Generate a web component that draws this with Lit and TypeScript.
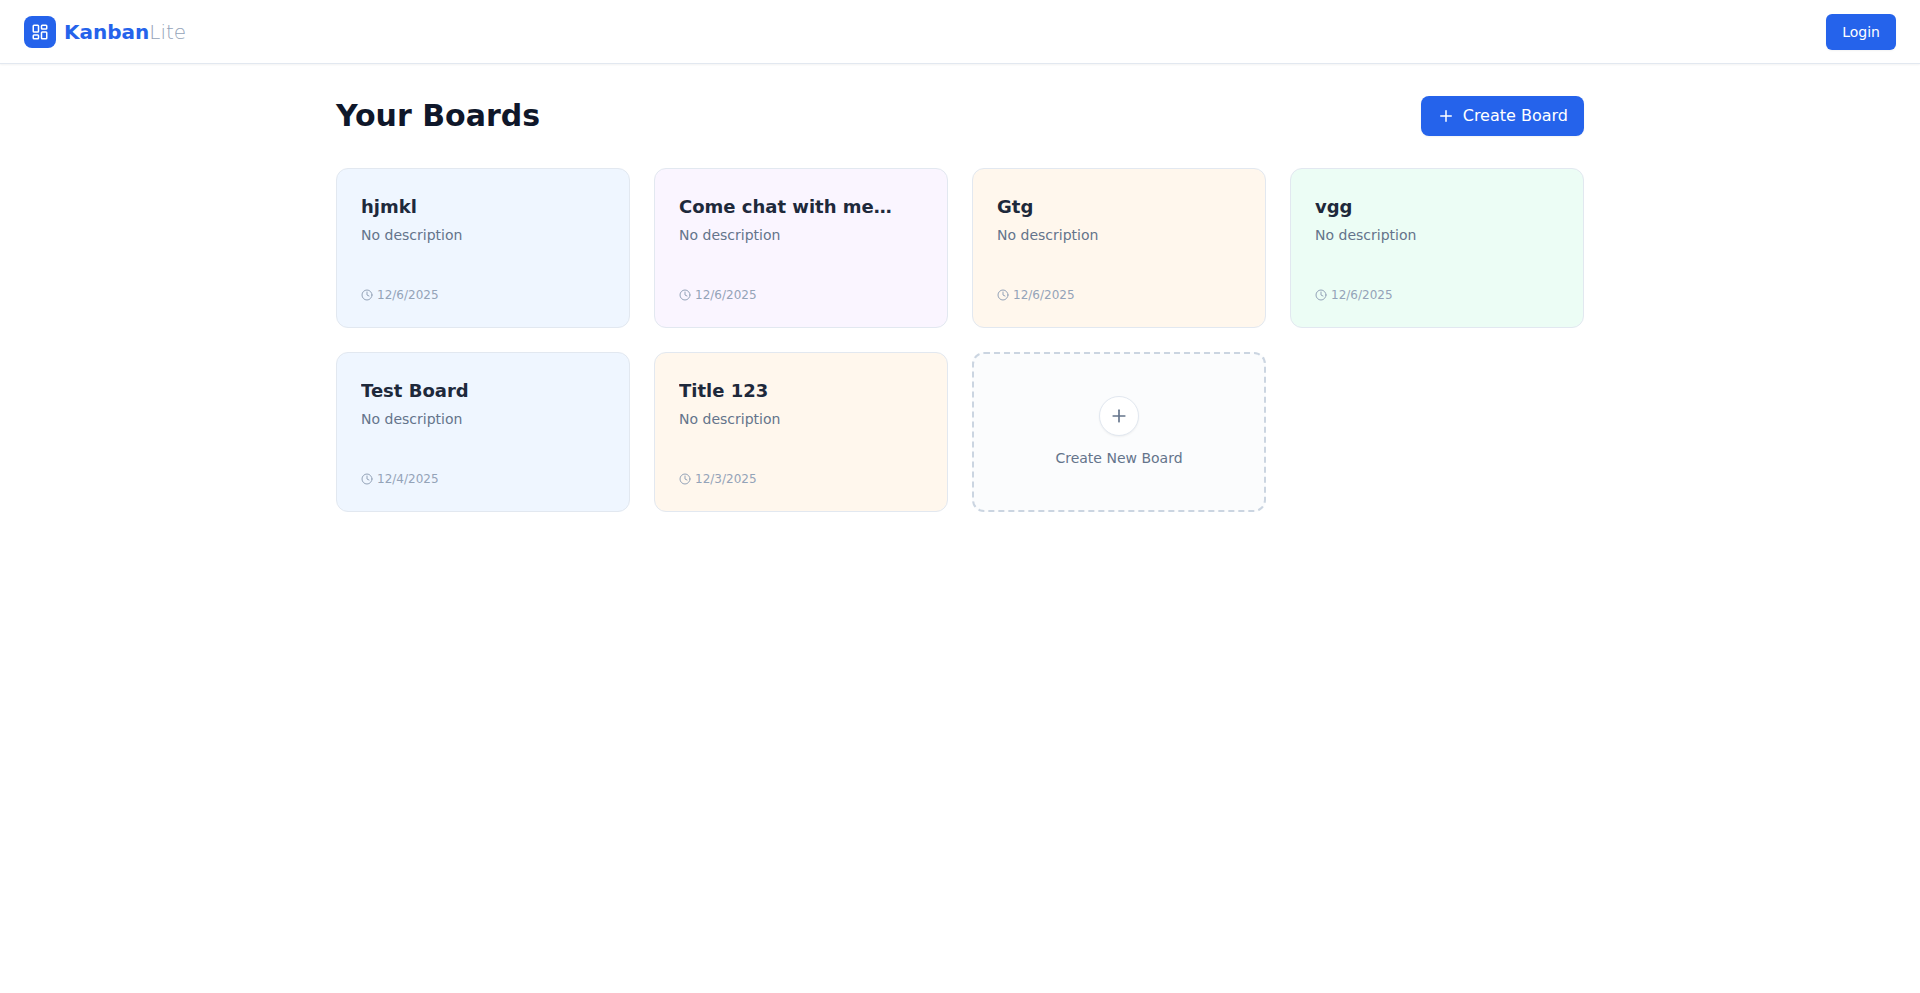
import { LitElement, html, css } from "lit";
import { customElement, state } from "lit/decorators.js";

interface Board {
  title: string;
  date: string;
  tone: "blue" | "purple" | "orange" | "green";
}

const plusIcon = html`<svg class="icon" viewBox="0 0 24 24" aria-hidden="true">
  <path d="M5 12h14" /><path d="M12 5v14" />
</svg>`;

const clockIcon = html`<svg class="icon" viewBox="0 0 24 24" aria-hidden="true">
  <circle cx="12" cy="12" r="10" /><path d="M12 6v6l4 2" />
</svg>`;

const dashboardIcon = html`<svg class="icon" viewBox="0 0 24 24" aria-hidden="true">
  <rect width="7" height="9" x="3" y="3" rx="1" />
  <rect width="7" height="5" x="14" y="3" rx="1" />
  <rect width="7" height="9" x="14" y="12" rx="1" />
  <rect width="7" height="5" x="3" y="16" rx="1" />
</svg>`;

@customElement("app-root")
export class AppRoot extends LitElement {
  @state() private boards: Board[] = [
    { title: "hjmkl", date: "12/6/2025", tone: "blue" },
    { title: "Come chat with me…", date: "12/6/2025", tone: "purple" },
    { title: "Gtg", date: "12/6/2025", tone: "orange" },
    { title: "vgg", date: "12/6/2025", tone: "green" },
    { title: "Test Board", date: "12/4/2025", tone: "blue" },
    { title: "Title 123", date: "12/3/2025", tone: "orange" },
  ];

  static styles = css`
    :host {
      display: block;
      min-height: 100vh;
      background: #fff;
      color: #0f172a;
      font-family: "DejaVu Sans", sans-serif;
      font-size: 16px;
      line-height: 24px;
    }
    *, *::before, *::after { box-sizing: border-box; }
    h1, h2, p, ul { margin: 0; padding: 0; }
    a { color: inherit; text-decoration: none; }
    button { font: inherit; border: 0; cursor: pointer; }
    .icon {
      display: block;
      width: 100%;
      height: 100%;
      fill: none;
      stroke: currentColor;
      stroke-width: 2;
      stroke-linecap: round;
      stroke-linejoin: round;
    }
    .header {
      display: flex;
      align-items: center;
      justify-content: space-between;
      height: 64px;
      padding: 0 24px;
      border-bottom: 1px solid #e2e8f0;
      background: #fff;
      box-shadow: 0 1px 2px rgb(0 0 0 / 5%);
    }
    .brand { display: flex; align-items: center; gap: 8px; }
    .logo {
      width: 32px;
      height: 32px;
      padding: 7px;
      border-radius: 8px;
      background: #2563eb;
      color: #fff;
    }
    .brand-name {
      font-size: 20px;
      line-height: 28px;
      font-weight: 700;
      color: #2563eb;
    }
    .brand-light { font-weight: 300; color: #94a3b8; }
    .login {
      height: 36px;
      padding: 0 16px;
      border-radius: 6px;
      background: #2563eb;
      color: #fff;
      font-size: 14px;
      line-height: 20px;
      box-shadow: 0 1px 2px rgb(0 0 0 / 5%);
    }
    .main { max-width: 1280px; margin: 0 auto; padding: 32px 16px; }
    .toolbar {
      display: flex;
      align-items: center;
      justify-content: space-between;
      margin-bottom: 32px;
    }
    .heading { font-size: 30px; line-height: 36px; font-weight: 700; }
    .create {
      display: flex;
      align-items: center;
      gap: 8px;
      padding: 8px 16px;
      border-radius: 8px;
      background: #2563eb;
      color: #fff;
      box-shadow: 0 1px 2px rgb(0 0 0 / 5%);
    }
    .create-icon { width: 18px; height: 18px; }
    .grid {
      display: grid;
      grid-template-columns: repeat(auto-fill, minmax(272px, 1fr));
      grid-auto-rows: 160px;
      gap: 24px;
      list-style: none;
    }
    .card {
      display: flex;
      flex-direction: column;
      justify-content: space-between;
      height: 100%;
      padding: 24px;
      border: 1px solid #e2e8f0;
      border-radius: 12px;
    }
    .blue { background: #eff6ff; }
    .purple { background: #faf5ff; }
    .orange { background: #fff7ed; }
    .green { background: #ecfdf5; }
    .card-title {
      margin-bottom: 4px;
      overflow: hidden;
      white-space: nowrap;
      text-overflow: ellipsis;
      font-size: 18px;
      line-height: 28px;
      font-weight: 700;
      color: #1e293b;
    }
    .card-text { font-size: 14px; line-height: 20px; color: #64748b; }
    .card-date {
      display: flex;
      align-items: center;
      gap: 4px;
      font-size: 12px;
      line-height: 16px;
      color: #94a3b8;
    }
    .date-icon { width: 12px; height: 12px; }
    .new-board {
      display: flex;
      flex-direction: column;
      align-items: center;
      justify-content: center;
      gap: 12px;
      width: 100%;
      height: 100%;
      border: 2px dashed #cbd5e1;
      border-radius: 12px;
      background: rgb(248 250 252 / 50%);
      color: #64748b;
      font-size: 14px;
      line-height: 20px;
    }
    .new-icon {
      width: 40px;
      height: 40px;
      padding: 9px;
      border: 1px solid #e2e8f0;
      border-radius: 50%;
      background: #fff;
      box-shadow: 0 1px 2px rgb(0 0 0 / 5%);
    }
  `;

  render() {
    return html`
      <header class="header">
        <a class="brand" href="#">
          <span class="logo">${dashboardIcon}</span>
          <span class="brand-name">Kanban<span class="brand-light">Lite</span></span>
        </a>
        <button class="login" type="button">Login</button>
      </header>
      <main class="main">
        <div class="toolbar">
          <h1 class="heading">Your Boards</h1>
          <button class="create" type="button">
            <span class="create-icon">${plusIcon}</span>Create Board
          </button>
        </div>
        <ul class="grid">
          ${this.boards.map(
            (board) => html`<li>
              <a class="card ${board.tone}" href="#">
                <div>
                  <h2 class="card-title">${board.title}</h2>
                  <p class="card-text">No description</p>
                </div>
                <div class="card-date">
                  <span class="date-icon">${clockIcon}</span>${board.date}
                </div>
              </a>
            </li>`
          )}
          <li>
            <button class="new-board" type="button">
              <span class="new-icon">${plusIcon}</span>
              <span>Create New Board</span>
            </button>
          </li>
        </ul>
      </main>
    `;
  }
}
